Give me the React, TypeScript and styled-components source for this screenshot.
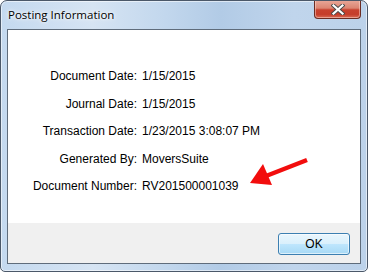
import React from 'react';
import styled, { createGlobalStyle } from 'styled-components';

const GlobalStyle = createGlobalStyle`
  html, body {
    margin: 0;
    padding: 0;
    background: #ffffff;
  }
  body {
    font-family: "Liberation Sans", Arial, sans-serif;
  }
`;

// 창 프레임
const Window = styled.div`
  position: relative;
  width: 368px;
  height: 272px;
  box-sizing: border-box;
  border: 1px solid #4b5869;
  border-radius: 7px 7px 5px 5px;
  background: linear-gradient(90deg, #c4d9ef 0%, #d6e4f3 25%, #c2d7ed 45%, #b2cbe6 60%, #c0d5ec 80%, #bcd2ea 100%);
  box-shadow: inset 0 0 0 1px rgba(255, 255, 255, 0.55);
  display: flex;
  flex-direction: column;
  padding: 0 6px 7px 6px;
  overflow: hidden;
`;

// 타이틀 바
const TitleBar = styled.div`
  height: 28px;
  display: flex;
  justify-content: space-between;
  align-items: flex-start;
`;

const TitleText = styled.div`
  font-family: "Open Sans", "Noto Sans", sans-serif;
  font-size: 11.5px;
  color: #000;
  padding: 6px 0 0 1px;
  text-shadow: 0 0 6px #ffffff, 0 0 3px #ffffff;
`;

const CloseButton = styled.div`
  width: 47px;
  height: 19px;
  margin-top: -1px;
  box-sizing: border-box;
  border: 1px solid #6b2c23;
  border-top: none;
  border-radius: 0 0 4px 4px;
  background: linear-gradient(180deg, #e9a99a 0%, #dc8572 45%, #c8412e 55%, #c53d2a 80%, #d86b55 100%);
  box-shadow: inset 0 0 0 1px rgba(255, 220, 210, 0.5);
  display: flex;
  align-items: center;
  justify-content: center;
`;

// 클라이언트 영역
const Client = styled.div`
  flex: 1;
  display: flex;
  flex-direction: column;
  border: 1px solid #5f6c7b;
  background: #ffffff;
`;

const Content = styled.div`
  flex: 1;
  display: grid;
  grid-template-columns: 129px 1fr;
  grid-auto-rows: 27.5px;
  column-gap: 5px;
  align-content: start;
  padding-top: 33px;
`;

const Label = styled.div`
  font-size: 12px;
  color: #000;
  text-align: right;
  line-height: 27.5px;
  white-space: nowrap;
`;

const Value = styled.div`
  font-size: 12px;
  color: #000;
  line-height: 27.5px;
  white-space: nowrap;
`;

const Footer = styled.div`
  height: 40px;
  background: #f0f0f0;
  display: flex;
  align-items: center;
  justify-content: flex-end;
  padding-right: 10px;
`;

const OkButton = styled.div`
  width: 72px;
  height: 22px;
  box-sizing: border-box;
  border: 1px solid #3c7fb1;
  border-radius: 3px;
  background: linear-gradient(180deg, #eaf6fd 0%, #d9f0fc 50%, #bee6fd 51%, #a7d9f5 100%);
  box-shadow: inset 0 0 0 1px rgba(255, 255, 255, 0.6);
  display: flex;
  align-items: center;
  justify-content: center;
  font-size: 12px;
  color: #000;
  margin-top: 1px;
`;

// 빨간 화살표 주석
const Annotation = styled.svg`
  position: absolute;
  left: -1px;
  top: -1px;
  width: 368px;
  height: 272px;
  pointer-events: none;
`;

const rows: [string, string][] = [
  ['Document Date:', '1/15/2015'],
  ['Journal Date:', '1/15/2015'],
  ['Transaction Date:', '1/23/2015 3:08:07 PM'],
  ['Generated By:', 'MoversSuite'],
  ['Document Number:', 'RV201500001039'],
];

const App: React.FC = () => {
  return (
    <>
      <GlobalStyle />
      <Window>
        <TitleBar>
          <TitleText>Posting Information</TitleText>
          <CloseButton>
            <svg width="14" height="11" viewBox="0 0 14 11">
              <path d="M2.5 1.5 L11.5 9.5 M11.5 1.5 L2.5 9.5" stroke="#4a4a4a" strokeWidth="4" strokeLinecap="square" fill="none" />
              <path d="M2.5 1.5 L11.5 9.5 M11.5 1.5 L2.5 9.5" stroke="#ffffff" strokeWidth="2.2" strokeLinecap="square" fill="none" />
            </svg>
          </CloseButton>
        </TitleBar>
        <Client>
          <Content>
            {rows.map(([label, value]) => (
              <React.Fragment key={label}>
                <Label>{label}</Label>
                <Value>{value}</Value>
              </React.Fragment>
            ))}
          </Content>
          <Footer>
            <OkButton>OK</OkButton>
          </Footer>
        </Client>
        <Annotation viewBox="0 0 368 272">
          <line x1="307" y1="160" x2="266" y2="176" stroke="#f20d0d" strokeWidth="4.5" />
          <polygon points="250,183 263,164 272,185" fill="#f20d0d" />
        </Annotation>
      </Window>
    </>
  );
};

export default App;
